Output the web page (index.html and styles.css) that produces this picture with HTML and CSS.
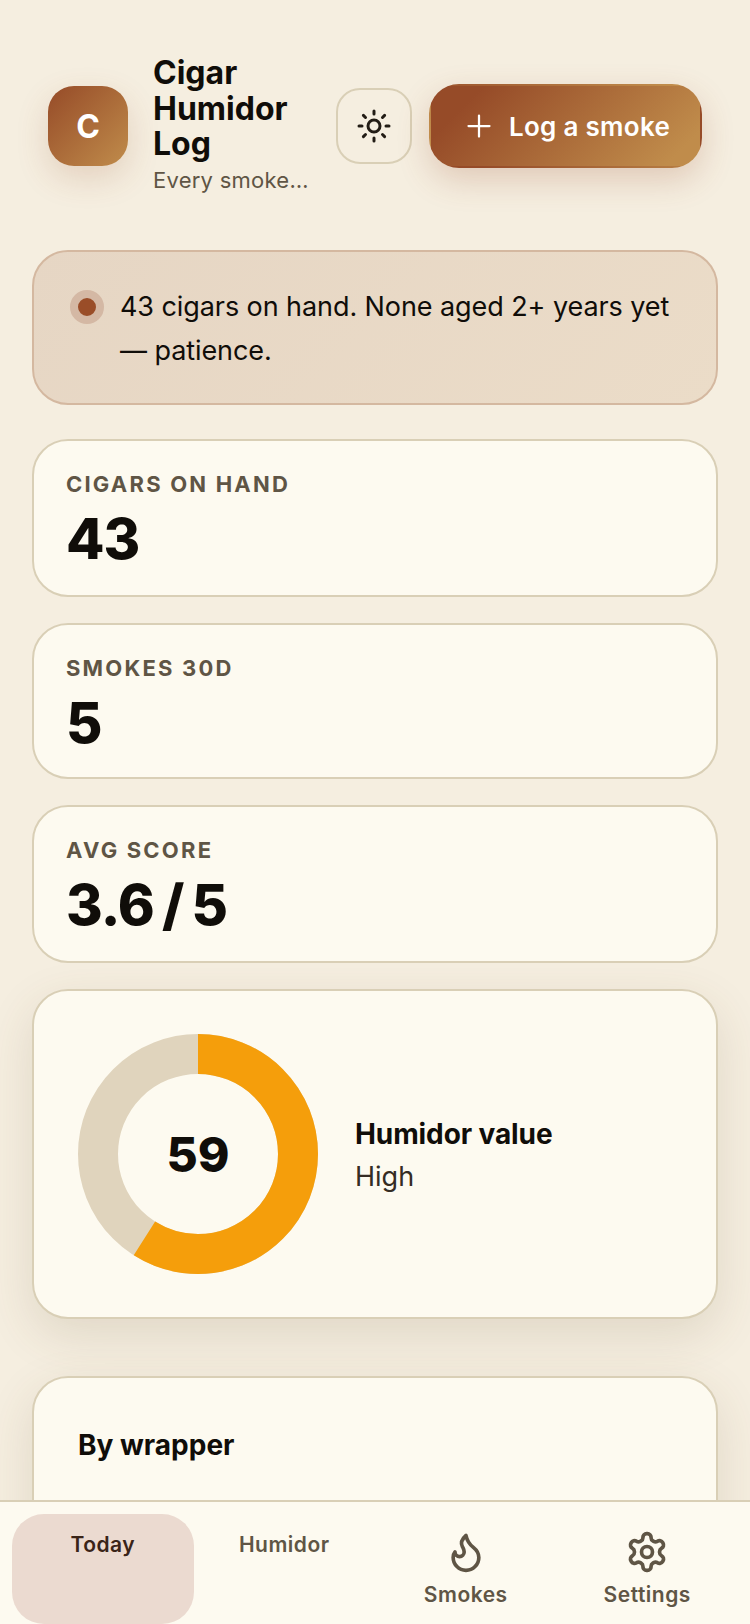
FILE: index.html
```html
<!DOCTYPE html>
<html lang="en">
<head>
  <meta charset="UTF-8">
  <meta name="viewport" content="width=device-width, initial-scale=1">
  <title>Cigar Humidor Log</title>
  <link rel="stylesheet" href="styles.css">
</head>
<body>
  <div class="app">
    <main class="main">
      <header class="header">
        <div class="logo">C</div>
        <div class="brand">
          <h1>Cigar Humidor Log</h1>
          <p>Every smoke…</p>
        </div>
        <button class="theme-btn" type="button" aria-label="Toggle theme">
          <svg viewBox="0 0 24 24" width="36" height="36" class="icon">
            <circle cx="12" cy="12" r="4"/>
            <path d="M12 2v2M12 20v2M4.93 4.93l1.41 1.41M17.66 17.66l1.41 1.41M2 12h2M20 12h2M6.34 17.66l-1.41 1.41M19.07 4.93l-1.41 1.41"/>
          </svg>
        </button>
        <button class="log-btn" type="button">
          <svg viewBox="0 0 24 24" width="36" height="36" class="icon icon-thin">
            <path d="M5 12h14M12 5v14"/>
          </svg>
          Log a smoke
        </button>
      </header>

      <div class="alert">
        <span class="alert-dot"></span>
        <p>43 cigars on hand. None aged 2+ years yet — patience.</p>
      </div>

      <section class="stats">
        <div class="card stat">
          <div class="stat-label">CIGARS ON HAND</div>
          <div class="stat-value">43</div>
        </div>
        <div class="card stat">
          <div class="stat-label">SMOKES 30D</div>
          <div class="stat-value">5</div>
        </div>
        <div class="card stat">
          <div class="stat-label">AVG SCORE</div>
          <div class="stat-value">3.6 / 5</div>
        </div>
      </section>

      <section class="card gauge-card">
        <div class="gauge">
          <svg viewBox="0 0 240 240" width="240" height="240">
            <circle cx="120" cy="120" r="100" class="gauge-track"/>
            <circle cx="120" cy="120" r="100" class="gauge-fill" pathLength="100" stroke-dasharray="59 41" transform="rotate(-90 120 120)"/>
          </svg>
          <span class="gauge-num">59</span>
        </div>
        <div class="gauge-text">
          <div class="gauge-title">Humidor value</div>
          <div class="gauge-sub">High</div>
        </div>
      </section>

      <section class="card wrapper-card">
        <h2>By wrapper</h2>
      </section>
    </main>

    <nav class="nav">
      <a class="nav-item active">Today</a>
      <a class="nav-item">Humidor</a>
      <a class="nav-item">
        <svg viewBox="0 0 24 24" width="44" height="44" class="icon">
          <path d="M8.5 14.5A2.5 2.5 0 0 0 11 12c0-1.38-.5-2-1-3-1.072-2.143-.224-4.054 2-6 .5 2.5 2 4.9 4 6.5 2 1.6 3 3.5 3 5.5a7 7 0 1 1-14 0c0-1.153.433-2.294 1-3a2.5 2.5 0 0 0 2.5 2.5z"/>
        </svg>
        Smokes
      </a>
      <a class="nav-item">
        <svg viewBox="0 0 24 24" width="44" height="44" class="icon">
          <path d="M12.22 2h-.44a2 2 0 0 0-2 2v.18a2 2 0 0 1-1 1.73l-.43.25a2 2 0 0 1-2 0l-.15-.08a2 2 0 0 0-2.73.73l-.22.38a2 2 0 0 0 .73 2.73l.15.1a2 2 0 0 1 1 1.72v.51a2 2 0 0 1-1 1.74l-.15.09a2 2 0 0 0-.73 2.73l.22.38a2 2 0 0 0 2.73.73l.15-.08a2 2 0 0 1 2 0l.43.25a2 2 0 0 1 1 1.73V20a2 2 0 0 0 2 2h.44a2 2 0 0 0 2-2v-.18a2 2 0 0 1 1-1.73l.43-.25a2 2 0 0 1 2 0l.15.08a2 2 0 0 0 2.73-.73l.22-.39a2 2 0 0 0-.73-2.73l-.15-.08a2 2 0 0 1-1-1.74v-.5a2 2 0 0 1 1-1.74l.15-.09a2 2 0 0 0 .73-2.73l-.22-.38a2 2 0 0 0-2.73-.73l-.15.08a2 2 0 0 1-2 0l-.43-.25a2 2 0 0 1-1-1.73V4a2 2 0 0 0-2-2z"/>
          <circle cx="12" cy="12" r="3"/>
        </svg>
        Settings
      </a>
    </nav>
  </div>
</body>
</html>
```

FILE: styles.css
```css
/* Cigar humidor dashboard, phone layout */
* { box-sizing: border-box; }
html, body { margin: 0; height: 100%; }
body { font-family: Inter, "Liberation Sans", sans-serif; background-color: #f5eee0; color: #100d09; }
h1, h2, p { margin: 0; }
.icon { fill: none; stroke: currentColor; stroke-width: 2; stroke-linecap: round; stroke-linejoin: round; display: block; }
.icon-thin { stroke-width: 1.5; }

.app { height: 100vh; display: flex; flex-direction: column; overflow: hidden; }
.main { flex: 1; min-height: 0; overflow: hidden; padding: 55px 32px 0; }

.header { display: flex; align-items: center; padding: 0 15px 0 16px; margin-bottom: 52.5px; }
.logo { width: 80px; height: 80px; flex: none; border-radius: 26px; background: linear-gradient(135deg, #964b28, #c08c4b); color: #fff; font-size: 32px; font-weight: 700; display: flex; align-items: center; justify-content: center; box-shadow: 0 12px 32px rgba(150,75,40,0.18); }
.brand { width: 159px; flex: none; margin-left: 25px; margin-right: 24px; }
.brand h1 { font-size: 32px; line-height: 35.5px; font-weight: 700; }
.brand p { font-size: 22px; line-height: 32px; color: #5f5545; letter-spacing: 0.25px; margin: 2px 0; white-space: nowrap; }
.theme-btn { width: 76px; height: 76px; flex: none; border: 2px solid #d9cfb6; border-radius: 24px; background: transparent; color: #221c15; display: flex; align-items: center; justify-content: center; padding: 0; }
.log-btn { width: 273px; height: 84px; flex: none; margin-left: 17px; border: 2px solid transparent; border-radius: 30px; background: linear-gradient(135deg, #964b28 15%, #c08c4b 90%); color: #fff; font: 600 26px Inter, sans-serif; letter-spacing: 0.3px; display: flex; align-items: center; justify-content: center; gap: 12px; padding: 0; box-shadow: 0 12px 32px rgba(150,75,40,0.22); }

.alert { display: flex; align-items: flex-start; gap: 16px; padding: 33px 36px 30px; border: 2px solid #d4b8a0; border-radius: 36px; background: linear-gradient(135deg, #e6d6c4, #ebdcc8); margin-bottom: 34px; }
.alert-dot { width: 34px; height: 34px; flex: none; margin-top: 5px; border-radius: 50%; background: #9a4d28; border: 8px solid #d4b8a4; }
.alert p { font-size: 27px; line-height: 44px; letter-spacing: -0.08px; }

.card { background: #fdfaf0; border: 2px solid #d9cfb6; border-radius: 36px; }
.stats { display: flex; flex-direction: column; gap: 26px; margin-bottom: 26px; }
.stat { padding: 28px 32px 21px; }
.stat:nth-child(2) { padding-bottom: 19px; }
.stat-label { font-size: 22px; line-height: 30px; font-weight: 700; letter-spacing: 2.2px; color: #5f5545; }
.stat-value { font-size: 56px; line-height: 70px; font-weight: 800; letter-spacing: -1px; word-spacing: -3px; margin-top: 5px; }

.gauge-card { display: flex; align-items: center; gap: 37px; padding: 43px 44px; margin-bottom: 57px; box-shadow: 0 16px 48px rgba(100,75,40,0.14); }
.gauge { width: 240px; height: 240px; flex: none; display: grid; place-items: center; }
.gauge svg, .gauge-num { grid-area: 1 / 1; }
.gauge-track, .gauge-fill { fill: none; stroke-width: 40; }
.gauge-track { stroke: #e0d4bd; }
.gauge-fill { stroke: #f59e0b; }
.gauge-num { font-size: 48px; font-weight: 800; }
.gauge-text { padding-top: 3px; }
.gauge-title { font-size: 28px; line-height: 40px; font-weight: 700; letter-spacing: -0.1px; }
.gauge-sub { font-size: 27px; line-height: 40px; color: #352c24; margin-top: 3px; }

.wrapper-card { padding: 48px 44px; height: 400px; box-shadow: 0 16px 48px rgba(100,75,40,0.14); }
.wrapper-card h2 { font-size: 28px; line-height: 38px; font-weight: 700; }

.nav { flex: none; height: 124px; display: grid; grid-template-columns: repeat(4, 1fr); padding: 12px 12px 0; background: #fdfaf0; border-top: 2px solid #d9cfb6; }
.nav-item { display: flex; flex-direction: column; align-items: center; padding-top: 16px; border-radius: 32px; font-size: 21px; line-height: 30px; font-weight: 600; letter-spacing: 0.5px; color: #5f5545; }
.nav-item .icon { margin-bottom: 6px; }
.nav-item.active { background: #ebdad0; color: #3a2418; }
```
